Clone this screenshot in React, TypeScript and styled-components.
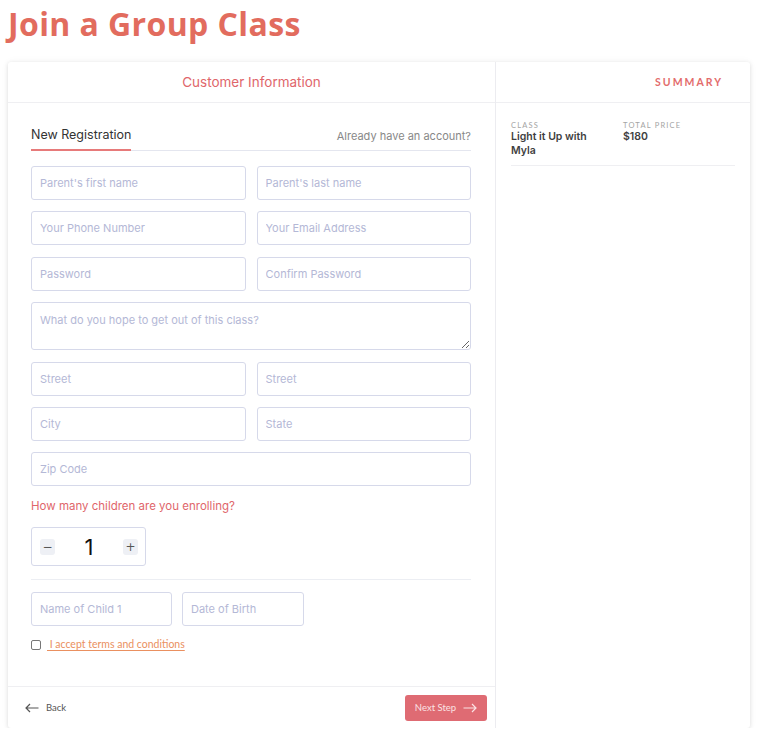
import React from "react";
import styled, { createGlobalStyle } from "styled-components";

const Global = createGlobalStyle`
  html, body { margin: 0; padding: 0; background: #fff; }
  body { font-family: Inter, "Noto Sans", sans-serif; color: #333; }
  * { box-sizing: border-box; }
`;

const Page = styled.div`
  padding: 0 18px 0 8px;
  width: 768px;
`;

const Title = styled.h1`
  margin: 0;
  height: 62px;
  padding-top: 4px;
  font-family: "Open Sans", Inter, sans-serif;
  font-weight: 700;
  font-size: 32px;
  line-height: 40px;
  color: #e26c5e;
  letter-spacing: 0.4px;
`;

const Card = styled.div`
  display: flex;
  height: 666px;
  background: #fff;
  border-radius: 3px;
  box-shadow: 0 1px 4px rgba(0, 0, 0, 0.12), 0 0 10px rgba(0, 0, 0, 0.04);
`;

const Main = styled.section`
  width: 487px;
  display: flex;
  flex-direction: column;
`;

const PanelHeader = styled.div<{ $align: "center" | "right" }>`
  height: 41px;
  display: flex;
  align-items: center;
  justify-content: ${(p) => (p.$align === "center" ? "center" : "flex-end")};
  padding: 0 27px 0 0;
  border-bottom: 1px solid #efeff2;
`;

const HeaderTitle = styled.h2`
  margin: 0;
  font-weight: 400;
  font-size: 13.5px;
  color: #e0666b;
  padding-left: 27px;
`;

const SummaryTitle = styled.h2`
  margin: 0;
  font-family: Lato, sans-serif;
  font-weight: 700;
  font-size: 10.5px;
  letter-spacing: 2px;
  color: #e36c6c;
`;

const Body = styled.div`
  flex: 1;
  padding: 0 24px 0 23px;
`;

const Tabs = styled.div`
  display: flex;
  justify-content: space-between;
  align-items: flex-end;
  padding-top: 24px;
  border-bottom: 1px solid #e4e6ef;
`;

const Tab = styled.div<{ $active?: boolean }>`
  font-size: ${(p) => (p.$active ? "12.5px" : "11px")};
  color: ${(p) => (p.$active ? "#333" : "#888")};
  padding-bottom: ${(p) => (p.$active ? "6px" : "5px")};
  line-height: 16px;
  border-bottom: 2px solid ${(p) => (p.$active ? "#e77a7a" : "transparent")};
  margin-bottom: -1px;
`;

const Fields = styled.div`
  display: flex;
  flex-direction: column;
  gap: 11.4px;
  margin-top: 15px;
`;

const Row = styled.div`
  display: grid;
  grid-template-columns: 1fr 1fr;
  gap: 11px;
`;

const Input = styled.input<{ $w?: number }>`
  height: 34px;
  width: ${(p) => (p.$w ? `${p.$w}px` : "100%")};
  border: 1px solid #d6d9ea;
  border-radius: 3px;
  padding: 0 8px;
  font-family: Inter, sans-serif;
  font-size: 11px;
  color: #333;
  outline: none;
  &::placeholder { color: #b4b8d6; }
`;

const TextArea = styled.textarea`
  height: 48px;
  width: 100%;
  border: 1px solid #d6d9ea;
  border-radius: 3px;
  padding: 10px 8px;
  font-family: Inter, sans-serif;
  font-size: 11px;
  resize: vertical;
  outline: none;
  display: block;
  &::placeholder { color: #b4b8d6; }
`;

const Question = styled.div`
  margin-top: 13px;
  font-size: 11.5px;
  line-height: 14px;
  color: #e0666b;
`;

const Stepper = styled.div`
  margin-top: 14px;
  width: 115px;
  height: 39px;
  border: 1px solid #d6d9ea;
  border-radius: 3px;
  display: flex;
  align-items: center;
  justify-content: space-between;
  padding: 0 7px 0 8px;
`;

const StepBtn = styled.button`
  width: 15px;
  height: 16px;
  border: none;
  background: #eef0f5;
  border-radius: 3px;
  font-size: 12px;
  line-height: 16px;
  padding: 0;
  color: #555;
  font-family: "DejaVu Sans", sans-serif;
`;

const Count = styled.span`
  font-family: Inter, sans-serif;
  font-size: 22px;
  color: #111;
`;

const Divider = styled.hr`
  border: none;
  border-top: 1px solid #eceef3;
  margin: 13px 0 0;
`;

const ChildRow = styled.div`
  display: flex;
  gap: 10px;
  margin-top: 12px;
`;

const Terms = styled.label`
  display: flex;
  align-items: center;
  gap: 6px;
  margin-top: 12px;
  font-family: Lato, sans-serif;
  font-size: 10.5px;
`;

const Check = styled.input`
  appearance: none;
  width: 10px;
  height: 10px;
  margin: 1px 0 0;
  border: 1px solid #777;
  border-radius: 2px;
`;

const TermsLink = styled.a`
  color: #ea9060;
  text-decoration: underline;
  text-underline-offset: 2px;
`;

const Footer = styled.div`
  height: 42px;
  border-top: 1px solid #efeff2;
  display: flex;
  align-items: center;
  justify-content: space-between;
  padding: 0 8px 0 17px;
`;

const BackBtn = styled.button`
  display: flex;
  align-items: center;
  gap: 7px;
  border: none;
  background: none;
  padding: 0;
  font-family: Lato, sans-serif;
  font-size: 9.5px;
  color: #555;
`;

const NextBtn = styled.button`
  width: 82px;
  height: 26px;
  border: none;
  border-radius: 3px;
  background: #df6b73;
  color: #fbe3e4;
  font-family: Lato, sans-serif;
  font-size: 9.5px;
  display: flex;
  align-items: center;
  justify-content: center;
  gap: 7px;
`;

const Side = styled.aside`
  flex: 1;
  border-left: 1px solid #ececf0;
`;

const SummaryBody = styled.div`
  padding: 0 15px;
`;

const SummaryGrid = styled.div`
  display: grid;
  grid-template-columns: 112px 1fr;
  padding: 18px 0 7px;
  border-bottom: 1px solid #efeff2;
`;

const Label = styled.div`
  font-family: Lato, sans-serif;
  font-size: 7.5px;
  letter-spacing: 1.2px;
  color: #a4a4a4;
  line-height: 9px;
`;

const Value = styled.div`
  font-family: Inter, sans-serif;
  font-weight: 600;
  font-size: 10.5px;
  line-height: 14px;
  color: #3f3f3f;
`;

const Arrow = ({ dir }: { dir: "left" | "right" }) => (
  <svg width="14" height="10" viewBox="0 0 14 10" fill="none" stroke="currentColor" strokeWidth="1.2">
    {dir === "left" ? (
      <path d="M13.5 5H1 M5 1L1 5L5 9" />
    ) : (
      <path d="M0.5 5H13 M9 1L13 5L9 9" />
    )}
  </svg>
);

export default function App() {
  return (
    <Page>
      <Global />
      <Title>Join a Group Class</Title>
      <Card>
        <Main>
          <PanelHeader $align="center">
            <HeaderTitle>Customer Information</HeaderTitle>
          </PanelHeader>
          <Body>
            <Tabs>
              <Tab $active>New Registration</Tab>
              <Tab>Already have an account?</Tab>
            </Tabs>
            <Fields>
              <Row>
                <Input placeholder="Parent's first name" />
                <Input placeholder="Parent's last name" />
              </Row>
              <Row>
                <Input placeholder="Your Phone Number" />
                <Input placeholder="Your Email Address" />
              </Row>
              <Row>
                <Input placeholder="Password" type="password" />
                <Input placeholder="Confirm Password" type="password" />
              </Row>
              <TextArea placeholder="What do you hope to get out of this class?" />
              <Row>
                <Input placeholder="Street" />
                <Input placeholder="Street" />
              </Row>
              <Row>
                <Input placeholder="City" />
                <Input placeholder="State" />
              </Row>
              <Input placeholder="Zip Code" />
            </Fields>
            <Question>How many children are you enrolling?</Question>
            <Stepper>
              <StepBtn>−</StepBtn>
              <Count>1</Count>
              <StepBtn>+</StepBtn>
            </Stepper>
            <Divider />
            <ChildRow>
              <Input $w={141} placeholder="Name of Child 1" />
              <Input $w={122} placeholder="Date of Birth" />
            </ChildRow>
            <Terms>
              <Check type="checkbox" />
              <TermsLink href="#">&nbsp;I accept terms and conditions</TermsLink>
            </Terms>
          </Body>
          <Footer>
            <BackBtn>
              <Arrow dir="left" />
              Back
            </BackBtn>
            <NextBtn>
              Next Step
              <Arrow dir="right" />
            </NextBtn>
          </Footer>
        </Main>
        <Side>
          <PanelHeader $align="right">
            <SummaryTitle>SUMMARY</SummaryTitle>
          </PanelHeader>
          <SummaryBody>
            <SummaryGrid>
              <div>
                <Label>CLASS</Label>
                <Value>
                  Light it Up with
                  <br />
                  Myla
                </Value>
              </div>
              <div>
                <Label>TOTAL PRICE</Label>
                <Value>$180</Value>
              </div>
            </SummaryGrid>
          </SummaryBody>
        </Side>
      </Card>
    </Page>
  );
}
